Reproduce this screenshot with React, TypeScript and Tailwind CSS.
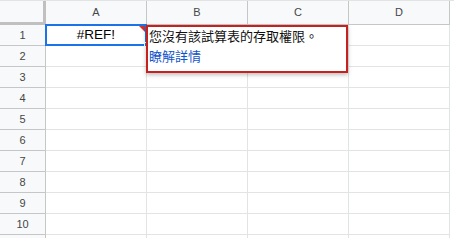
import React from 'react';

const cols = ['A', 'B', 'C', 'D'];
const rows = [1, 2, 3, 4, 5, 6, 7, 8, 9, 10, 11];

const App: React.FC = () => {
  return (
    <div className="relative w-[454px] h-[238px] overflow-hidden bg-white" style={{ fontFamily: 'Arial, "Liberation Sans", sans-serif' }}>
      {/* header row */}
      <div className="flex h-[25px] border-t border-[#e2e3e3]">
        <div className="w-[46px] shrink-0 bg-[#f8f9fa] border-r-[3px] border-b-[3px] border-[#c0c0c0]" />
        {cols.map(c => (
          <div
            key={c}
            className="w-[101px] shrink-0 flex items-center justify-center text-[11px] text-[#444746] bg-[#f8f9fa] border-b border-r border-[#c4c7c5]"
          >
            {c}
          </div>
        ))}
      </div>

      {rows.map(r => (
        <div key={r} className="flex h-[21px]">
          <div className="w-[46px] shrink-0 flex items-center justify-center text-[11px] text-[#444746] bg-[#f8f9fa] border-r border-b border-[#c4c7c5]">
            {r < 11 ? r : ''}
          </div>
          {cols.map(c => (
            <div key={c} className="w-[101px] shrink-0 border-r border-b border-[#e2e3e3] flex items-center justify-center text-[13.5px] text-black">
              {r === 1 && c === 'A' ? '#REF!' : ''}
            </div>
          ))}
        </div>
      ))}

      {/* selected cell A1 */}
      <div className="absolute left-[45px] top-[24px] w-[102px] h-[22px] border-2 border-[#1a73e8]" />
      <div className="absolute left-[144px] top-[42px] w-[5px] h-[5px] bg-[#1a73e8] border border-white" />
      {/* error triangle */}
      <div className="absolute left-[139px] top-[26px] w-0 h-0 border-l-[6px] border-l-transparent border-t-[6px] border-t-[#d93025]" />

      {/* error popup */}
      <div className="absolute left-[146px] top-[25px] w-[202px] h-[48px] border-2 border-[#c5221f] bg-white shadow-[0_2px_4px_rgba(0,0,0,0.25)] px-[1px] leading-[20px] text-[13px]" style={{ fontFamily: '"Liberation Sans", "Noto Sans CJK TC", sans-serif' }}>
        <div className="text-[#111111]">您沒有該試算表的存取權限。</div>
        <div className="text-[#1155cc]">瞭解詳情</div>
      </div>
    </div>
  );
};

export default App;
